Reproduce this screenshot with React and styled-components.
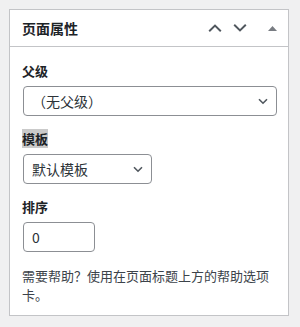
import React from 'react'
import styled, { createGlobalStyle } from 'styled-components'

const GlobalStyle = createGlobalStyle`
  html, body {
    margin: 0;
    padding: 0;
    background: #f0f0f1;
  }
  body {
    font-family: "Noto Sans CJK SC", "Noto Sans", "Liberation Sans", sans-serif;
    color: #1d2327;
  }
`

const Page = styled.div`
  padding: 9px 11px 10px 9px;
`

const Panel = styled.div`
  width: 280px;
  box-sizing: border-box;
  background: #fff;
  border: 1px solid #c3c4c7;
`

const Header = styled.div`
  height: 36px;
  display: flex;
  align-items: center;
  border-bottom: 1px solid #c3c4c7;
  padding-left: 12px;
`

const Title = styled.h2`
  margin: 0;
  flex: 1;
  font-size: 14px;
  font-weight: 600;
  line-height: 18px;
  color: #1d2327;
`

const Actions = styled.div`
  display: flex;
  align-items: center;
`

const IconButton = styled.span`
  display: flex;
  align-items: center;
  justify-content: center;
  width: ${p => p.$w}px;
  height: 20px;
  color: ${p => p.$c || '#50575e'};
`

const Body = styled.div`
  padding: 15px 11px 11px 12px;
  display: flex;
  flex-direction: column;
`

const Label = styled.div`
  font-size: 13px;
  font-weight: 600;
  line-height: 18px;
  margin-top: ${p => p.$top || 0}px;
`

const Highlight = styled.span`
  background: #cacaca;
`

const Select = styled.div`
  box-sizing: border-box;
  margin-top: 6px;
  margin-left: 1px;
  width: ${p => p.$w}px;
  height: 30px;
  border: 1px solid #8c8f94;
  border-radius: 4px;
  display: flex;
  align-items: center;
  padding: 0 8px 0 8px;
  font-size: 14px;
  color: #2c3338;
`

const SelectText = styled.span`
  flex: 1;
  white-space: pre;
`

const NumberInput = styled.div`
  box-sizing: border-box;
  margin-top: 6px;
  margin-left: 1px;
  width: 72px;
  height: 30px;
  border: 1px solid #8c8f94;
  border-radius: 4px;
  display: flex;
  align-items: center;
  padding-left: 8px;
  font-size: 14px;
  color: #2c3338;
`

const Help = styled.p`
  margin: 14px 0 0;
  font-size: 13px;
  line-height: 19px;
  color: #3c434a;
`

const Chevron = ({ up }) => (
  <svg width="14" height="8" viewBox="0 0 14 8" fill="none">
    <path
      d={up ? 'M1.2 7.2 L7 1.6 L12.8 7.2' : 'M1.2 0.8 L7 6.4 L12.8 0.8'}
      stroke="currentColor"
      strokeWidth="2"
    />
  </svg>
)

const SelectArrow = () => (
  <svg width="10" height="7" viewBox="0 0 10 7" fill="none">
    <path d="M1 1.2 L5 5.2 L9 1.2" stroke="#50575e" strokeWidth="1.6" />
  </svg>
)

const Triangle = () => (
  <svg width="9" height="5" viewBox="0 0 9 5">
    <path d="M0 5 L4.5 0 L9 5 Z" fill="currentColor" />
  </svg>
)

export default function App() {
  return (
    <Page>
      <GlobalStyle />
      <Panel>
        <Header>
          <Title>页面属性</Title>
          <Actions>
            <IconButton $w={19}><Chevron up /></IconButton>
            <IconButton $w={32}><Chevron /></IconButton>
            <IconButton $w={32} $c="#787c82"><Triangle /></IconButton>
          </Actions>
        </Header>
        <Body>
          <Label>父级</Label>
          <Select $w={254}>
            <SelectText>（无父级）</SelectText>
            <SelectArrow />
          </Select>
          <Label $top={14}><Highlight>模板</Highlight></Label>
          <Select $w={129}>
            <SelectText>默认模板</SelectText>
            <SelectArrow />
          </Select>
          <Label $top={14}>排序</Label>
          <NumberInput>0</NumberInput>
          <Help>需要帮助？使用在页面标题上方的帮助选项卡。</Help>
        </Body>
      </Panel>
    </Page>
  )
}
